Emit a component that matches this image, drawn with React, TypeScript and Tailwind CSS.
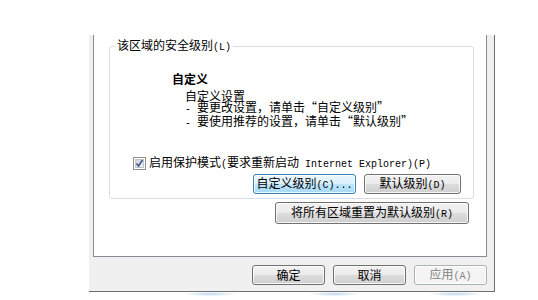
import React from "react";

// SimSun-like mix: CJK at 12px, ASCII runs in a half-width mono
function Txt({ s }: { s: string }) {
  const parts = s.split(/([\x20-\x7e]+)/);
  return (
    <>
      {parts.map((p, i) =>
        /[\x20-\x7e]/.test(p) ? (
          <span key={i} className="font-['Liberation_Mono',monospace] text-[10px] whitespace-pre">
            {p}
          </span>
        ) : (
          <React.Fragment key={i}>{p}</React.Fragment>
        )
      )}
    </>
  );
}

function Button({
  label,
  className = "",
  variant = "normal",
}: {
  label: string;
  className?: string;
  variant?: "normal" | "hot" | "disabled";
}) {
  const look =
    variant === "hot"
      ? "border-[#3c7fb1] bg-[linear-gradient(#eaf6fd,#d9f0fc_50%,#bee6fd_50%,#a7d9f5)] text-black"
      : variant === "disabled"
      ? "border-[#adb2b5] bg-[#f4f4f4] text-[#838383]"
      : "border-[#707070] bg-[linear-gradient(#f2f2f2,#ebebeb_50%,#dddddd_50%,#cfcfcf)] text-black";
  return (
    <div
      className={`flex items-center justify-center rounded-[3px] border shadow-[inset_0_0_0_1px_rgba(255,255,255,0.8)] leading-[12px] ${look} ${className}`}
    >
      <span>
        <Txt s={label} />
      </span>
    </div>
  );
}

function Checkbox() {
  return (
    <svg width="13" height="13" viewBox="0 0 13 13" className="shrink-0">
      <defs>
        <linearGradient id="cb" x1="0" y1="0" x2="1" y2="1">
          <stop offset="0" stopColor="#cbcfd5" />
          <stop offset="1" stopColor="#f6f6f6" />
        </linearGradient>
      </defs>
      <rect x="0.5" y="0.5" width="12" height="12" fill="#fff" stroke="#8e8f8f" />
      <rect x="2.5" y="2.5" width="8" height="8" fill="url(#cb)" stroke="#c2c6cc" strokeWidth="1" />
      <path d="M3.5 6.5 L5.5 9 L9.5 3" fill="none" stroke="#4a5f97" strokeWidth="1.8" />
    </svg>
  );
}

export default function App() {
  return (
    <div className="h-[300px] w-[538px] bg-white pl-[89px] pt-[35px] font-['Noto_Sans_CJK_SC',sans-serif] text-[12px] text-black">
      <div className="w-[406px] border-b border-r border-[#6e6e6e] bg-[#f0f0f0] pl-[4px] pr-[7px]">
        {/* tab page */}
        <div className="h-[222px] w-[394px] border-x border-b border-[#898c95] bg-white pl-[15px] pt-[4px]">
          <fieldset className="h-[160px] w-[365px] rounded-[3px] border border-[#d5dfe5]">
            <legend className="ml-[5px] px-[2px] leading-[12px]">
              <Txt s="该区域的安全级别(L)" />
            </legend>

            <div className="mt-[19px] pl-[62px] font-bold leading-[12px]">自定义</div>
            <div className="mt-[5px] pl-[75px] leading-[11px]">
              <div>自定义设置</div>
              <div>
                <Txt s="- 要更改设置，请单击“自定义级别”" />
              </div>
              <div>
                <Txt s="- 要使用推荐的设置，请单击“默认级别”" />
              </div>
            </div>

            <div className="mt-[28px] flex h-[13px] items-center gap-[3px] pl-[23px] leading-[12px]">
              <Checkbox />
              <span className="whitespace-nowrap">
                <Txt s="启用保护模式(要求重新启动 Internet Explorer)(P)" />
              </span>
            </div>

            <div className="mt-[4px] flex gap-[8px] pl-[143px]">
              <Button label="自定义级别(C)..." variant="hot" className="h-[20px] w-[103px]" />
              <Button label="默认级别(D)" className="h-[20px] w-[97px]" />
            </div>
          </fieldset>

          <Button label="将所有区域重置为默认级别(R)" className="ml-[166px] mt-[3px] h-[22px] w-[194px]" />
        </div>

        {/* dialog buttons */}
        <div className="flex h-[34px] w-[394px] justify-end gap-[8px] pt-[8px]">
          <Button label="确定" className="h-[20px] w-[73px]" />
          <Button label="取消" className="h-[20px] w-[73px]" />
          <Button label="应用(A)" variant="disabled" className="h-[20px] w-[73px]" />
        </div>
      </div>

      {/* aero reflection under the frame */}
      <div className="flex h-[5px] pl-[94px]">
        <div className="h-[4px] w-[55px] rounded-full bg-[radial-gradient(ellipse_at_center,#b8d4ee,transparent_70%)]" />
        <div className="ml-[69px] h-[4px] w-[54px] rounded-full bg-[radial-gradient(ellipse_at_center,#b8d4ee,transparent_70%)]" />
        <div className="ml-[66px] h-[4px] w-[57px] rounded-full bg-[radial-gradient(ellipse_at_center,#b8d4ee,transparent_70%)]" />
      </div>
    </div>
  );
}
